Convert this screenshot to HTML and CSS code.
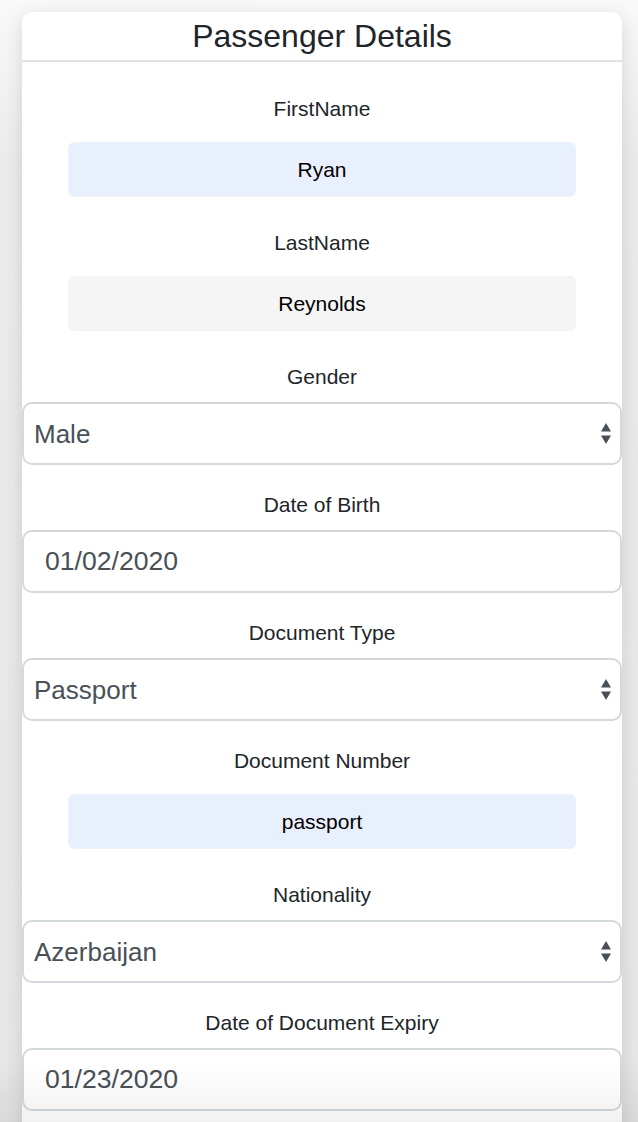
FILE: index.html
```html
<!DOCTYPE html>
<html lang="en">
<head>
<meta charset="utf-8">
<title>Passenger Details</title>
<link rel="stylesheet" href="styles.css">
</head>
<body>
<div class="card">
  <div class="card-header"><h1 class="title">Passenger Details</h1></div>
  <form class="form">
    <div class="field">
      <label class="label">FirstName</label>
      <input class="text-input autofill" type="text" value="Ryan">
    </div>
    <div class="field">
      <label class="label">LastName</label>
      <input class="text-input plain" type="text" value="Reynolds">
    </div>
    <div class="field">
      <label class="label">Gender</label>
      <div class="select-wrap">
        <select class="select"><option>Male</option></select>
        <svg class="arrows" width="12" height="24" viewBox="0 0 12 24"><path d="M1 9.5 L6 1 L11 9.5 Z M1 13.5 L6 22 L11 13.5 Z" fill="#495057"/></svg>
      </div>
    </div>
    <div class="field">
      <label class="label">Date of Birth</label>
      <input class="date-input" type="text" value="01/02/2020">
    </div>
    <div class="field">
      <label class="label">Document Type</label>
      <div class="select-wrap">
        <select class="select"><option>Passport</option></select>
        <svg class="arrows" width="12" height="24" viewBox="0 0 12 24"><path d="M1 9.5 L6 1 L11 9.5 Z M1 13.5 L6 22 L11 13.5 Z" fill="#495057"/></svg>
      </div>
    </div>
    <div class="field">
      <label class="label">Document Number</label>
      <input class="text-input autofill" type="text" value="passport">
    </div>
    <div class="field">
      <label class="label">Nationality</label>
      <div class="select-wrap">
        <select class="select"><option>Azerbaijan</option></select>
        <svg class="arrows" width="12" height="24" viewBox="0 0 12 24"><path d="M1 9.5 L6 1 L11 9.5 Z M1 13.5 L6 22 L11 13.5 Z" fill="#495057"/></svg>
      </div>
    </div>
    <div class="field">
      <label class="label">Date of Document Expiry</label>
      <input class="date-input" type="text" value="01/23/2020">
    </div>
  </form>
</div>
<div class="bottom-fade"></div>
</body>
</html>
```

FILE: styles.css
```css
html, body {
  margin: 0;
  padding: 0;
}
body {
  background: linear-gradient(to bottom, #f9f9f9 0, #ebebeb 160px, #e6e6e6 100%);
  min-height: 1122px;
  font-family: "Liberation Sans", Arial, Helvetica, sans-serif;
  overflow: hidden;
}
.card {
  width: 600px;
  margin: 12px 16px 0 22px;
  background: #fff;
  border-radius: 10px 10px 0 0;
  box-shadow: 0 4px 18px rgba(0, 0, 0, 0.13);
  padding-bottom: 40px;
}
.card-header {
  height: 48px;
  border-bottom: 2px solid #dee2e6;
  display: flex;
  align-items: center;
  justify-content: center;
}
.title {
  margin: 0;
  font-size: 32px;
  font-weight: normal;
  line-height: 48px;
  color: #212529;
}
.form {
  padding-top: 32px;
  display: flex;
  flex-direction: column;
  gap: 25px;
}
.field {
  display: flex;
  flex-direction: column;
  align-items: center;
}
.label {
  font-size: 21px;
  line-height: 30px;
  color: #212529;
  margin-bottom: 10px;
}
.text-input {
  box-sizing: border-box;
  width: 508px;
  height: 55px;
  margin: 8px 0 6px;
  border-radius: 6px;
  font-family: "Liberation Sans", Arial, sans-serif;
  font-size: 21px;
  color: #000;
  text-align: center;
  outline: none;
  padding: 0 10px;
}
.autofill {
  background: #e8f0fe;
  border: 1px solid #eef2f8;
}
.plain {
  background: #f5f5f5;
  border: 1px solid #f3f3f3;
}
.select-wrap {
  position: relative;
  width: 100%;
}
.select {
  -webkit-appearance: none;
  appearance: none;
  display: block;
  box-sizing: border-box;
  width: 100%;
  height: 63px;
  border: 2px solid #d4d9de;
  border-radius: 10px;
  background: #fff;
  padding: 0 30px 0 10px;
  font-family: "Liberation Sans", Arial, sans-serif;
  font-size: 26px;
  color: #495057;
  outline: none;
}
.arrows {
  position: absolute;
  right: 10px;
  top: 20px;
  pointer-events: none;
}
.date-input {
  box-sizing: border-box;
  width: 100%;
  height: 63px;
  border: 2px solid #d4d9de;
  border-radius: 10px;
  background: #fff;
  padding: 0 20px 0 21px;
  font-family: "Liberation Sans", Arial, sans-serif;
  font-size: 26.6px;
  color: #495057;
  outline: none;
}
.bottom-fade {
  position: fixed;
  left: 0;
  right: 0;
  bottom: 0;
  height: 60px;
  pointer-events: none;
  background: linear-gradient(to bottom, rgba(0, 0, 0, 0), rgba(0, 0, 0, 0.055));
}
```
